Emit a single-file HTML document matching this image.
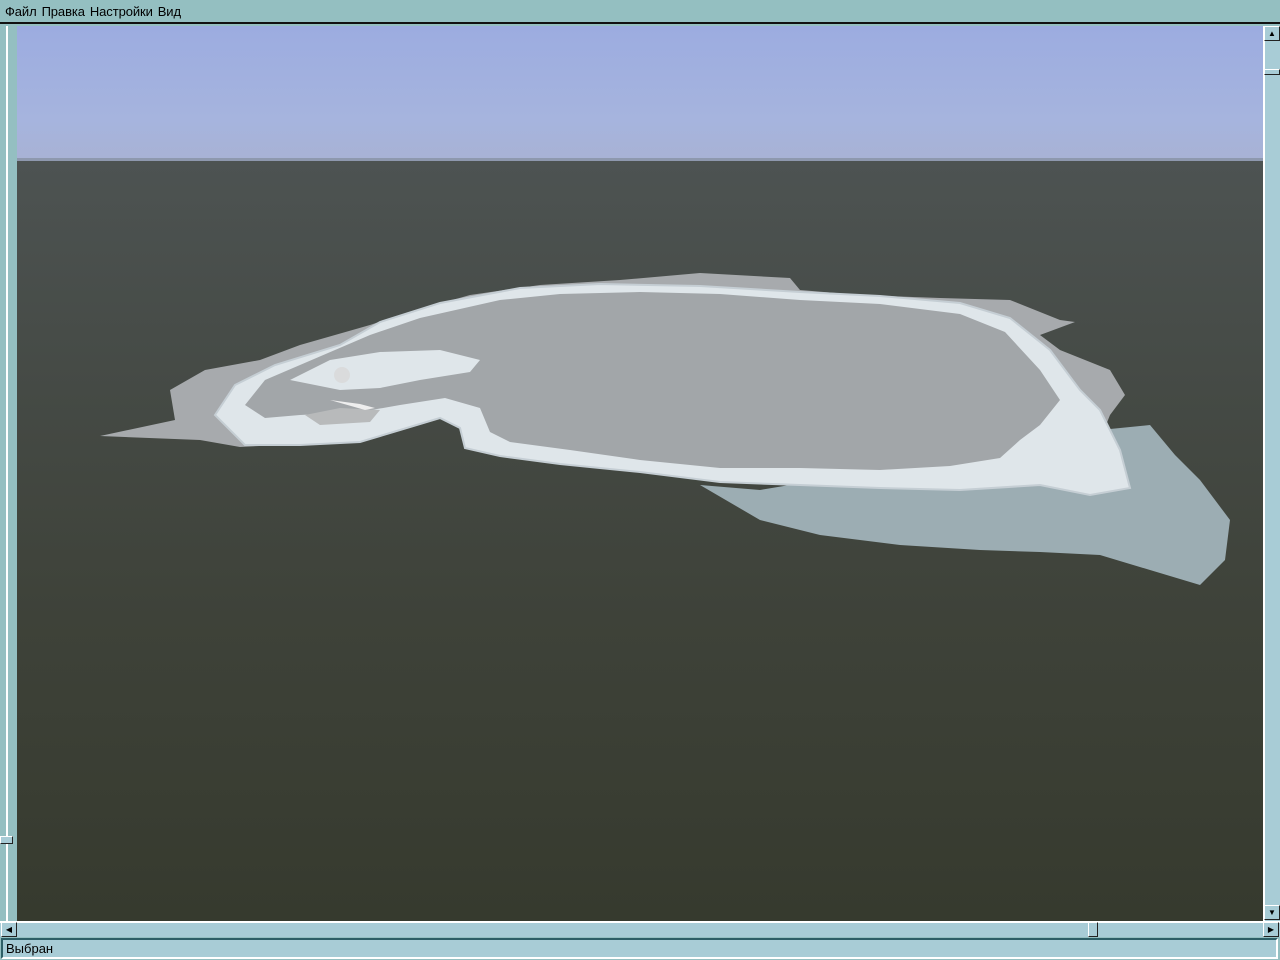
<!DOCTYPE html>
<html><head><meta charset="utf-8"><style>
*{margin:0;padding:0;box-sizing:border-box}
body{width:1280px;height:960px;overflow:hidden;background:#94bfc1;font-family:"Liberation Sans",sans-serif;position:relative}
.menu{position:absolute;left:0;top:0;width:1280px;height:24px;background:#94bfc1;border-bottom:2px solid #111;font-size:13px;line-height:23px;padding-left:5px;color:#000;letter-spacing:-0.1px}
.menu span{margin-right:5px}
#scene{position:absolute;left:17px;top:26px}
.lstrip{position:absolute;left:0;top:26px;width:17px;height:895px;background:#94bfc1}
.lstrip .ln{position:absolute;left:6px;top:0;width:2px;height:895px;background:#fff}
.lstrip .th{position:absolute;left:0;top:810px;width:13px;height:8px;border:1px solid #fff;border-right-color:#222;border-bottom-color:#222;background:#a8ccd6}
.rbar{position:absolute;left:1263px;top:26px;width:17px;height:895px;background:#a8ccd6;border-left:2px solid #fff}
.btn{position:absolute;width:16px;height:15px;background:#a8ccd6;border:1px solid #fff;border-right-color:#222;border-bottom-color:#222;font-size:8px;line-height:13px;text-align:center;color:#000}
.bbar{position:absolute;left:0;top:921px;width:1280px;height:16px;background:#a8ccd6;border-top:2px solid #fff}
.status{position:absolute;left:0;top:937px;width:1280px;height:23px;background:#94bfc1}
.status div{position:absolute;left:1px;top:1px;width:1277px;height:21px;border:2px solid #fff;border-top-color:#2d5e66;border-left-color:#2d5e66;background:#a8ccd6;font-size:13px;line-height:17px;padding-left:3px}
</style></head><body>
<div class="menu"><span>Файл</span><span>Правка</span><span>Настройки</span><span>Вид</span></div>
<svg id="scene" width="1246" height="895" viewBox="17 26 1246 895">
<defs>
<linearGradient id="sky" x1="0" y1="0" x2="0" y2="1"><stop offset="0" stop-color="#9cace0"/><stop offset=".7" stop-color="#a6b4de"/><stop offset="1" stop-color="#a8b2d4"/></linearGradient>
<linearGradient id="sea" x1="0" y1="0" x2="0" y2="1"><stop offset="0" stop-color="#4d5352"/><stop offset=".3" stop-color="#454a45"/><stop offset=".6" stop-color="#3e4239"/><stop offset="1" stop-color="#363a2e"/></linearGradient>
</defs>
<rect x="17" y="26" width="1246" height="135" fill="url(#sky)"/>
<rect x="17" y="158" width="1246" height="3" fill="#8e98ae"/>
<rect x="17" y="161" width="1246" height="760" fill="url(#sea)"/>
<path d="M700,485 L760,490 820,480 900,478 980,470 1040,455 1100,430 1150,425 1175,455 1200,480 1230,520 1225,560 1200,585 1150,570 1100,555 1040,552 980,550 900,545 820,535 760,520 Z" fill="#9cadb3"/>
<path d="M100,436 L175,420 170,390 205,370 260,360 300,345 370,325 400,315 470,295 540,285 620,280 700,273 790,278 800,290 860,295 940,298 1010,300 1060,320 1075,322 1040,335 1060,350 1110,370 1125,395 1110,415 1100,440 1080,460 1000,475 900,480 800,480 720,478 640,470 560,460 500,455 470,445 460,425 430,415 390,425 330,440 280,445 240,447 200,440 Z" fill="#a7aaad"/>
<path d="M215,415 L235,385 275,365 340,345 380,322 440,303 520,288 600,284 700,286 800,292 880,296 960,303 1010,318 1050,350 1080,390 1100,410 1120,450 1130,488 1090,495 1040,485 960,490 880,488 800,485 720,482 640,472 560,464 500,456 465,448 460,428 440,418 400,430 360,442 300,445 245,445 Z" fill="#dfe6ea" stroke="#c5ced4" stroke-width="2"/>
<path d="M245,405 L265,380 300,365 370,335 420,318 500,300 560,294 640,292 720,294 800,300 880,304 960,314 1005,332 1040,370 1060,400 1040,425 1020,440 1000,458 950,466 880,470 800,468 720,468 640,460 570,450 510,442 490,432 480,408 445,398 400,405 360,412 300,415 265,418 Z" fill="#a2a6a9"/>
<path d="M290,380 L330,360 380,352 440,350 480,360 470,372 420,380 380,388 340,390 Z" fill="#dfe6ea"/>
<path d="M305,415 L340,408 380,410 370,422 320,425 Z" fill="#b8babb"/>
<path d="M330,400 L360,404 375,408 365,410 Z" fill="#eee"/>
<circle cx="342" cy="375" r="8" fill="#d8d8d8" opacity=".8"/>
</svg>
<div class="lstrip"><div class="ln"></div><div class="th"></div></div>
<div class="rbar"><div class="btn" style="left:-1px;top:0">▲</div><div class="btn" style="left:-1px;top:43px;height:6px"></div><div class="btn" style="left:-1px;top:879px">▼</div></div>
<div class="bbar"><div class="btn" style="left:1px;top:-1px">◀</div><div class="btn" style="left:1088px;top:-1px;width:10px"></div><div class="btn" style="left:1263px;top:-1px">▶</div></div>
<div class="status"><div>Выбран</div></div>
</body></html>
